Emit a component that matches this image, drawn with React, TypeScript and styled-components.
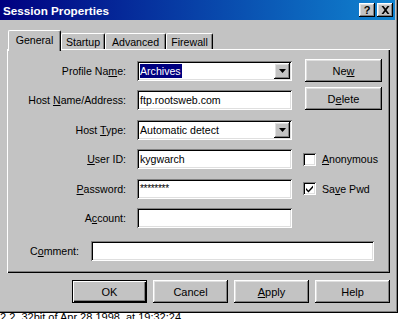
import * as React from "react";
import styled, { createGlobalStyle, css } from "styled-components";

const GlobalStyle = createGlobalStyle`
  html, body {
    margin: 0;
    padding: 0;
    background: #ffffff;
  }
  body {
    font-family: "Liberation Sans", Arial, sans-serif;
    font-size: 10.6px;
    color: #000000;
    overflow: hidden;
  }
`;

const raised = css`
  box-shadow: inset -1px -1px 0 #000000, inset 1px 1px 0 #ffffff,
    inset -2px -2px 0 #808080, inset 2px 2px 0 #dfdfdf;
`;

const sunken = css`
  box-shadow: inset 1px 1px 0 #808080, inset -1px -1px 0 #ffffff,
    inset 2px 2px 0 #000000, inset -2px -2px 0 #dfdfdf;
`;

const Page = styled.div`
  width: 401px;
  height: 319px;
  overflow: hidden;
  background: #ffffff;
`;

const Window = styled.div`
  width: 398px;
  height: 313px;
  box-sizing: border-box;
  background: #c3c3c3;
  border-right: 1px solid #000000;
  border-bottom: 1px solid #000000;
  box-shadow: inset -1px -1px 0 #808080;
  display: flex;
  flex-direction: column;
`;

const TitleBar = styled.div`
  height: 20px;
  margin-right: 2px;
  padding: 0 2px 0 3px;
  background: linear-gradient(to right, #000080, #1084d0);
  display: flex;
  align-items: center;
`;

const Title = styled.div`
  flex: 1;
  color: #ffffff;
  font-weight: bold;
  font-size: 11.7px;
`;

const TitleButtons = styled.div`
  display: flex;
  gap: 2px;
`;

const TitleButton = styled.div`
  width: 16px;
  height: 14px;
  background: #c3c3c3;
  ${raised};
  display: flex;
  align-items: center;
  justify-content: center;
  font-weight: bold;
  font-size: 11px;
  line-height: 1;
`;

const TabRow = styled.div`
  height: 29px;
  padding-left: 8px;
  display: flex;
  align-items: flex-end;
`;

const Tab = styled.div<{ $active?: boolean; $width: number }>`
  position: relative;
  width: ${(p) => p.$width}px;
  height: ${(p) => (p.$active ? 21 : 16)}px;
  margin-bottom: ${(p) => (p.$active ? -2 : 0)}px;
  padding-top: ${(p) => (p.$active ? 3 : 2)}px;
  box-sizing: border-box;
  background: #c3c3c3;
  border-top: 1px solid #ffffff;
  border-left: 1px solid #ffffff;
  border-right: 1px solid #000000;
  border-radius: 2px 2px 0 0;
  box-shadow: inset -1px 0 0 #808080;
  text-align: center;
  z-index: ${(p) => (p.$active ? 2 : 0)};
`;

const Panel = styled.div`
  height: 224px;
  margin: 0 7px 0 7px;
  padding-top: 12px;
  box-sizing: border-box;
  background: #c3c3c3;
  box-shadow: inset 1px 1px 0 #ffffff, inset -1px -1px 0 #000000,
    inset -2px -2px 0 #808080;
`;

const FormGrid = styled.div`
  display: grid;
  grid-template-columns: 119px 155px 79px;
  grid-template-rows: repeat(6, 20px);
  column-gap: 11px;
  row-gap: 9.4px;
`;

const Label = styled.div<{ $row: number }>`
  grid-column: 1;
  grid-row: ${(p) => p.$row};
  align-self: center;
  text-align: right;
  white-space: nowrap;
`;

const Field = styled.div<{ $row: number }>`
  grid-column: 2;
  grid-row: ${(p) => p.$row};
  height: 20px;
  box-sizing: border-box;
  padding: 0 2px 0 3px;
  background: #ffffff;
  ${sunken};
  display: flex;
  align-items: center;
  white-space: nowrap;
`;

const FieldText = styled.span`
  flex: 1;
`;

const Selected = styled.span`
  background: #000080;
  color: #ffffff;
  padding: 1px 1px 1px 0;
`;

const Stars = styled.span`
  align-self: flex-start;
  margin-top: 4px;
  font-size: 10px;
  letter-spacing: -0.3px;
`;

const DropButton = styled.div`
  width: 16px;
  height: 16px;
  background: #c3c3c3;
  ${raised};
  display: flex;
  align-items: center;
  justify-content: center;
`;

const SideButtons = styled.div`
  grid-column: 3;
  grid-row: 1 / span 2;
  margin-top: -2px;
  padding-left: 2px;
  display: flex;
  flex-direction: column;
  gap: 5px;
`;

const Button = styled.div<{ $default?: boolean; $width: number }>`
  width: ${(p) => p.$width}px;
  height: 23px;
  box-sizing: border-box;
  background: #c3c3c3;
  ${(p) =>
    p.$default
      ? css`
          box-shadow: inset 1px 1px 0 #000000, inset -1px -1px 0 #000000,
            inset 2px 2px 0 #ffffff, inset -2px -2px 0 #000000,
            inset -3px -3px 0 #808080;
        `
      : raised};
  display: flex;
  align-items: center;
  justify-content: center;
  font-size: 11px;
`;

const CheckRow = styled.div<{ $row: number }>`
  grid-column: 3;
  grid-row: ${(p) => p.$row};
  display: flex;
  align-items: center;
  gap: 6px;
  white-space: nowrap;
`;

const CheckBox = styled.div`
  width: 13px;
  height: 13px;
  box-sizing: border-box;
  background: #ffffff;
  ${sunken};
  display: flex;
  align-items: center;
  justify-content: center;
`;

const CommentRow = styled.div`
  margin-top: 13px;
  display: flex;
  align-items: center;
  gap: 12px;
`;

const CommentLabel = styled.div`
  width: 72px;
  text-align: right;
`;

const CommentField = styled.div`
  width: 283px;
  height: 20px;
  background: #ffffff;
  ${sunken};
`;

const ButtonRow = styled.div`
  margin: 7px 7px 0 0;
  display: flex;
  justify-content: flex-end;
  gap: 6px;
`;

const Status = styled.div`
  height: 6px;
  line-height: 9px;
  font-size: 11px;
  white-space: nowrap;
`;

const Arrow = () => (
  <svg width="7" height="4" viewBox="0 0 7 4">
    <path d="M0 0h7L3.5 4z" fill="#000000" />
  </svg>
);

const Check = () => (
  <svg width="9" height="9" viewBox="0 0 9 9">
    <path d="M1 4l2.5 2.5L8 1.5v2.3L3.5 8.5L1 6z" fill="#000000" />
  </svg>
);

const CloseGlyph = () => (
  <svg width="9" height="8" viewBox="0 0 9 8">
    <path d="M0.5 0h2l2 2.5 2-2.5h2l-3 4 3 4h-2l-2-2.5-2 2.5h-2l3-4z" fill="#000000" />
  </svg>
);

export default function App() {
  return (
    <Page>
      <GlobalStyle />
      <Window>
        <TitleBar>
          <Title>Session Properties</Title>
          <TitleButtons>
            <TitleButton>?</TitleButton>
            <TitleButton>
              <CloseGlyph />
            </TitleButton>
          </TitleButtons>
        </TitleBar>

        <TabRow>
          <Tab $active $width={53}>General</Tab>
          <Tab $width={44}>Startup</Tab>
          <Tab $width={61}>Advanced</Tab>
          <Tab $width={47}>Firewall</Tab>
        </TabRow>

        <Panel>
          <FormGrid>
            <Label $row={1}>
              Profile Na<u>m</u>e:
            </Label>
            <Field $row={1}>
              <FieldText>
                <Selected>Archives</Selected>
              </FieldText>
              <DropButton>
                <Arrow />
              </DropButton>
            </Field>

            <Label $row={2}>
              Host <u>N</u>ame/Address:
            </Label>
            <Field $row={2}>
              <FieldText>ftp.rootsweb.com</FieldText>
            </Field>

            <Label $row={3}>
              Host <u>T</u>ype:
            </Label>
            <Field $row={3}>
              <FieldText>Automatic detect</FieldText>
              <DropButton>
                <Arrow />
              </DropButton>
            </Field>

            <Label $row={4}>
              <u>U</u>ser ID:
            </Label>
            <Field $row={4}>
              <FieldText>kygwarch</FieldText>
            </Field>

            <Label $row={5}>
              <u>P</u>assword:
            </Label>
            <Field $row={5}>
              <Stars>********</Stars>
            </Field>

            <Label $row={6}>
              A<u>c</u>count:
            </Label>
            <Field $row={6} />

            <SideButtons>
              <Button $width={77}>
                Ne<u>w</u>
              </Button>
              <Button $width={77}>
                D<u>e</u>lete
              </Button>
            </SideButtons>

            <CheckRow $row={4}>
              <CheckBox />
              <span>
                <u>A</u>nonymous
              </span>
            </CheckRow>
            <CheckRow $row={5}>
              <CheckBox>
                <Check />
              </CheckBox>
              <span>
                Sa<u>v</u>e Pwd
              </span>
            </CheckRow>
          </FormGrid>

          <CommentRow>
            <CommentLabel>
              C<u>o</u>mment:
            </CommentLabel>
            <CommentField />
          </CommentRow>
        </Panel>

        <ButtonRow>
          <Button $default $width={75}>OK</Button>
          <Button $width={75}>Cancel</Button>
          <Button $width={75}>
            <u>A</u>pply
          </Button>
          <Button $width={75}>Help</Button>
        </ButtonRow>
      </Window>
      <Status>2.2, 32bit of Apr 28 1998, at 19:32:24</Status>
    </Page>
  );
}
